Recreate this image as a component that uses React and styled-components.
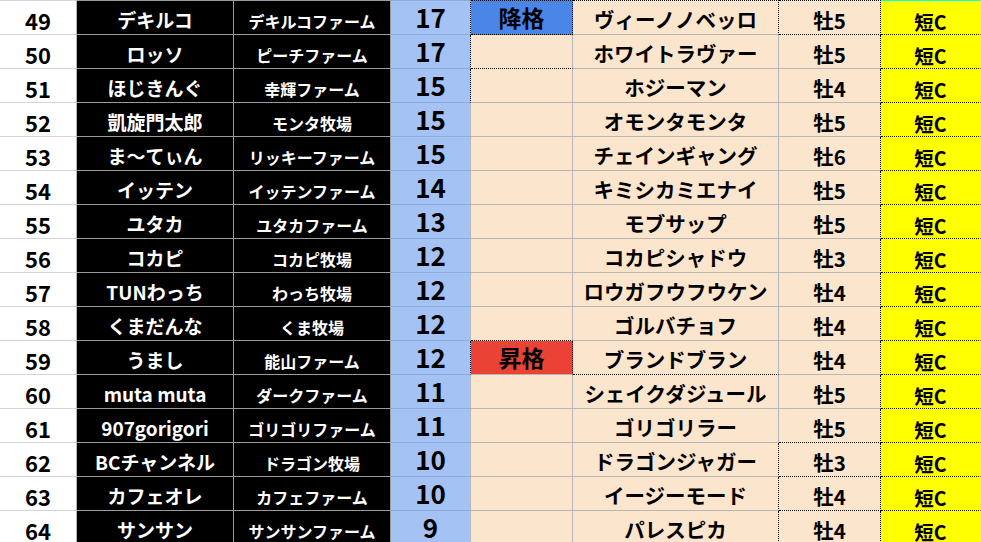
import React from "react";
import styled, { createGlobalStyle } from "styled-components";

const GlobalStyle = createGlobalStyle`
  html, body {
    margin: 0;
    padding: 0;
    background: #ffffff;
    overflow: hidden;
  }
`;

const COLS = "77px 157px 157px 80px 102px 206px 102px 100px";

const Sheet = styled.div`
  width: 981px;
  display: flex;
  flex-direction: column;
  font-family: "Noto Sans CJK JP", "Noto Sans", sans-serif;
  font-weight: 700;
`;

const Row = styled.div`
  display: grid;
  grid-template-columns: ${COLS};
  height: ${(p) => (p.$first ? 35 : 34)}px;
`;

const edge = (v) => (v === "dot" ? "1px dotted #000000" : `1px solid ${v}`);

const Cell = styled.div`
  box-sizing: border-box;
  display: flex;
  align-items: flex-end;
  justify-content: center;
  white-space: nowrap;
  line-height: 1.1;
  background: ${(p) => p.$bg};
  color: ${(p) => p.$fg};
  font-size: ${(p) => p.$size}px;
  padding-bottom: ${(p) => p.$pb}px;
  border-right: ${(p) => edge(p.$r)};
  border-bottom: ${(p) => edge(p.$b)};
  border-top: ${(p) => (p.$t ? edge(p.$t) : "none")};
`;

const PEACH = "#fce5cd";

const columns = [
  { bg: "#ffffff", fg: "#000000", line: "#d4d4d4", right: "#b4b4b4", size: 22, pb: 2 },
  { bg: "#000000", fg: "#ffffff", line: "#9c9c9c", right: "#9c9c9c", size: 19, pb: 3 },
  { bg: "#000000", fg: "#ffffff", line: "#9c9c9c", right: "#9c9c9c", size: 16, pb: 3 },
  { bg: "#a4c2f4", fg: "#000000", line: "#8fabdc", right: "#b7b7b7", size: 26, pb: 2 },
  { bg: PEACH, fg: "#000000", line: "#b7b7b7", right: "#b7b7b7", size: 23, pb: 4 },
  { bg: PEACH, fg: "#000000", line: "#b7b7b7", right: "#b7b7b7", size: 20.5, pb: 3 },
  { bg: PEACH, fg: "#000000", line: "#b7b7b7", right: "dot", size: 20.5, pb: 2 },
  { bg: "#ffff00", fg: "#000000", line: "dot", right: "#ffff00", size: 19.5, pb: 2 },
];

const STATUS = { 降格: "#4a86e8", 昇格: "#ea4335" };

const rows = [
  [49, "デキルコ", "デキルコファーム", 17, "降格", "ヴィーノノベッロ", "牡5"],
  [50, "ロッソ", "ピーチファーム", 17, "", "ホワイトラヴァー", "牡5"],
  [51, "ほじきんぐ", "幸輝ファーム", 15, "", "ホジーマン", "牡4"],
  [52, "凱旋門太郎", "モンタ牧場", 15, "", "オモンタモンタ", "牡5"],
  [53, "ま〜てぃん", "リッキーファーム", 15, "", "チェインギャング", "牡6"],
  [54, "イッテン", "イッテンファーム", 14, "", "キミシカミエナイ", "牡5"],
  [55, "ユタカ", "ユタカファーム", 13, "", "モブサップ", "牡5"],
  [56, "コカピ", "コカピ牧場", 12, "", "コカピシャドウ", "牡3"],
  [57, "TUNわっち", "わっち牧場", 12, "", "ロウガフウフウケン", "牡4"],
  [58, "くまだんな", "くま牧場", 12, "", "ゴルバチョフ", "牡4"],
  [59, "うまし", "能山ファーム", 12, "昇格", "ブランドブラン", "牡4"],
  [60, "muta muta", "ダークファーム", 11, "", "シェイクダジュール", "牡5"],
  [61, "907gorigori", "ゴリゴリファーム", 11, "", "ゴリゴリラー", "牡5"],
  [62, "BCチャンネル", "ドラゴン牧場", 10, "", "ドラゴンジャガー", "牡3"],
  [63, "カフェオレ", "カフェファーム", 10, "", "イージーモード", "牡4"],
  [64, "サンサン", "サンサンファーム", 9, "", "パレスピカ", "牡4"],
];

// dotted outlines that the sheet carries on some cells: "row:col" -> sides
const dotted = {
  "49:3": "r",
  "49:4": "rb",
  "49:5": "r",
  "49:6": "b",
  "50:3": "r",
  "50:4": "b",
  "51:3": "r",
  "58:4": "b",
  "59:3": "r",
  "59:4": "r",
  "59:5": "b",
  "61:6": "b",
  "62:5": "r",
  "62:6": "b",
  "63:5": "r",
  "63:6": "b",
  "64:5": "r",
};

const topEdge = ["#d4d4d4", "#9c9c9c", "#9c9c9c", "#8fabdc", "dot", "dot", "dot", "#00ffff"];

function SheetRow({ data, first }) {
  const [num, name, farm, pts, status, horse, sex] = data;
  const values = [num, name, farm, pts, status, horse, sex, "短C"];
  return (
    <Row $first={first}>
      {values.map((v, i) => {
        const col = columns[i];
        const marks = dotted[`${num}:${i}`] || "";
        const bg = i === 4 && STATUS[v] ? STATUS[v] : col.bg;
        return (
          <Cell
            key={i}
            $bg={bg}
            $fg={col.fg}
            $size={col.size}
            $pb={col.pb}
            $r={marks.includes("r") ? "dot" : col.right}
            $b={marks.includes("b") ? "dot" : col.line}
            $t={first ? topEdge[i] : null}
          >
            {v}
          </Cell>
        );
      })}
    </Row>
  );
}

export default function App() {
  return (
    <>
      <GlobalStyle />
      <Sheet>
        {rows.map((r, idx) => (
          <SheetRow key={r[0]} data={r} first={idx === 0} />
        ))}
      </Sheet>
    </>
  );
}
